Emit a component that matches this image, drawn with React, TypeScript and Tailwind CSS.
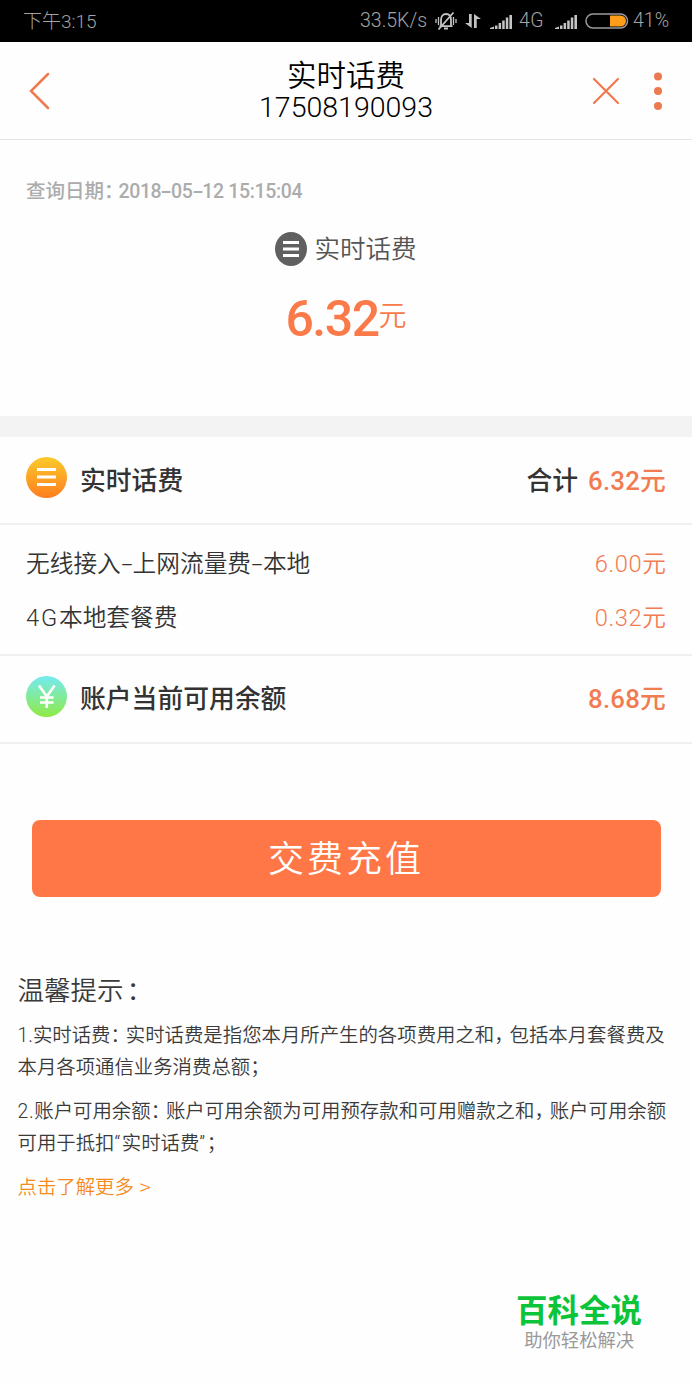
import type { ReactNode } from "react";

const CARGOS = [
  { nombre: "无线接入-上网流量费-本地", monto: "6.00元" },
  { nombre: "4G本地套餐费", monto: "0.32元" },
];

function P({ children }: { children: ReactNode }) {
  return <span className="tracking-[-0.21em]">{children}</span>;
}

// hyphens are drawn wide and "4G" a bit looser than the rest
function Texto({ texto }: { texto: string }) {
  return (
    <>
      {texto.split(/(-|4G)/).map((t, i) => {
        if (t === "-") return <span key={i} className="inline-block w-[0.5em] text-center scale-x-[1.700]">-</span>;
        if (t === "4G") return <span key={i} className="tracking-[1.800px]">4G</span>;
        return <span key={i}>{t}</span>;
      })}
    </>
  );
}

function Signal() {
  return (
    <svg width="23" height="15" viewBox="0 0 23 15" fill="#c4c4c4" className="shrink-0">
      <path d="M0 15v-1l4-1.5V15zM5 11.500h2.500V15H5zM8.600 9h2.500v6H8.600zM12.200 6.500h2.500V15h-2.500zM15.800 3.500h2.500V15h-2.500zM19.400 1H22v14h-2.600z" />
    </svg>
  );
}

function StatusBar() {
  return (
    <div className="h-[42px] bg-black flex items-center pl-[23px] pr-[22px] text-[#a3a3a3] text-[19px] font-light leading-none">
      <span className="flex-1">下午3:15</span>
      <span className="w-[66px] text-[19.500px] whitespace-nowrap">33.5K/s</span>
      <svg width="22" height="20" viewBox="0 0 22 20" fill="none" stroke="#c4c4c4" strokeWidth="1.800" className="ml-[9px] shrink-0">
        <path d="M4.500 15.200h13M6 15V9c0-4 2-6 5-6s5 2 5 6v6M3.500 18.500 18.500 1.500M9 17.500h4" />
        <path d="M3.500 6v8M1 8v4M18.500 6v8M21 8v4" strokeWidth="1.300" />
      </svg>
      <svg width="16" height="16" viewBox="0 0 16 16" fill="#c4c4c4" className="ml-[8px] shrink-0">
        <path d="M4 1h2.700v14L0 10h4zM9 1l7 5h-4.300v9H9z" />
      </svg>
      <div className="ml-[9px]"><Signal /></div>
      <span className="ml-[6px] w-[27px] text-[19.500px] tracking-[0.500px]">4G</span>
      <div className="ml-[9px]"><Signal /></div>
      <svg width="44" height="16" viewBox="0 0 44 16" className="ml-[7px] shrink-0">
        <rect x="1" y="1" width="41.500" height="14" rx="7" fill="none" stroke="#9a9a9a" strokeWidth="1.500" />
        <path d="M25 2.500h10.500a5.500 5.500 0 0 1 0 11H25z" fill="#ff9c1a" />
      </svg>
      <span className="ml-[4px] w-[37px] text-[19.500px] whitespace-nowrap">41%</span>
    </div>
  );
}

function Header() {
  return (
    <header className="h-[98px] border-b border-[#e4e4e4] flex items-center">
      <div className="w-[200px] pl-[28px]">
        <svg width="24" height="40" viewBox="0 0 24 40" fill="none" stroke="#f0794e" strokeWidth="2.500" strokeLinecap="round">
          <path d="M20 3 3 20l17 17" />
        </svg>
      </div>
      <div className="flex-1 text-center text-black font-light">
        <div className="pt-[2px] text-[29.500px] leading-[32px] font-[350]">实时话费</div>
        <div className="text-[28.500px] leading-[32px]">17508190093</div>
      </div>
      <div className="w-[200px] flex items-center justify-end gap-[33px] pr-[29px]">
        <svg width="28" height="28" viewBox="0 0 28 28" stroke="#f0794e" strokeWidth="2.200" strokeLinecap="round">
          <path d="m2 2 24 24M26 2 2 26" />
        </svg>
        <svg width="10" height="38" viewBox="0 0 10 38" fill="#ec7a50">
          <circle cx="5" cy="4.500" r="4" />
          <circle cx="5" cy="19" r="4" />
          <circle cx="5" cy="34" r="4" />
        </svg>
      </div>
    </header>
  );
}

export default function App() {
  return (
    <div className="w-[692px] h-[1384px] overflow-hidden bg-[#fefefe] text-[#333] font-[Roboto,'Noto_Sans_CJK_SC',sans-serif]">
      <StatusBar />
      <Header />

      <section className="h-[276px] pt-[40px]">
        <p className="pl-[26px] text-[19.500px] leading-6 font-medium text-[#acacac]">
          查询日期<P>：</P>
          <span className="-ml-px tracking-[-0.350px]"><Texto texto="2018-05-12 15:15:04" /></span>
        </p>
        <div className="mt-[28px] flex items-center justify-center gap-[7px]">
          <svg width="32" height="34" viewBox="0 0 32 34">
            <ellipse cx="16" cy="17" rx="16" ry="17" fill="#606060" />
            <path d="M8 10.500h16M8 17h16M8 23.500h16" stroke="#fff" strokeWidth="2.800" />
          </svg>
          <span className="text-[25.500px] leading-[34px] font-[350] text-[#555]">实时话费</span>
        </div>
        <div className="mt-[24px] flex items-start justify-center text-[#fb7a49]">
          <span className="text-[50px] leading-[58px] font-medium tracking-[-1.500px]">6.32</span>
          <span className="text-[28px] leading-[54px] font-[350]">元</span>
        </div>
      </section>

      <div className="h-[21px] bg-[#f3f3f3]" />

      <section className="h-[88px] border-b-2 border-[#f0f0f0] flex items-center px-[26px] text-[25.800px] font-medium">
        <svg width="41" height="41" viewBox="0 0 41 41" className="mb-[6px]">
          <defs>
            <linearGradient id="naranja" x1="0" y1="0" x2="0" y2="1">
              <stop offset="0" stopColor="#fbcb2b" />
              <stop offset="1" stopColor="#ff7d1f" />
            </linearGradient>
          </defs>
          <circle cx="20.500" cy="20.500" r="20.500" fill="url(#naranja)" />
          <path d="M11 12.500h19M11 20h19M11 27.500h19" stroke="#fff" strokeWidth="3" />
        </svg>
        <h2 className="ml-[13px] pt-[2px] flex-1">实时话费</h2>
        <span className="pt-[2px]">合计</span>
        <span className="ml-[10px] pt-[2px] tracking-[0.200px] text-[#f27c51]">6.32元</span>
      </section>

      <section className="h-[131px] border-b-2 border-[#f0f0f0] px-[26px] pt-[13px]">
        {CARGOS.map((c) => (
          <div key={c.nombre} className="h-[54px] flex items-center justify-between text-[23.700px] font-[350]">
            <span><Texto texto={c.nombre} /></span>
            <span className="tracking-[0.600px] -mr-[0.600px] text-[#f27c51]">{c.monto}</span>
          </div>
        ))}
      </section>

      <section className="h-[88px] border-b-2 border-[#f0f0f0] flex items-center px-[26px] text-[25.800px] font-medium">
        <svg width="41" height="41" viewBox="0 0 41 41" className="mb-[6px]">
          <defs>
            <linearGradient id="verde" x1="0" y1="0" x2="0" y2="1">
              <stop offset="0" stopColor="#74eaf2" />
              <stop offset="1" stopColor="#8fea45" />
            </linearGradient>
          </defs>
          <circle cx="20.500" cy="20.500" r="20.500" fill="url(#verde)" />
          <path d="m13 9.500 7.800 11 7.800-11M20.800 20v12M14 21.500h13.600M14 26.500h13.600" stroke="#fff" strokeWidth="2.600" fill="none" />
        </svg>
        <h2 className="ml-[13px] flex-1">账户当前可用余额</h2>
        <span className="tracking-[0.200px] text-[#f27c51]">8.68元</span>
      </section>

      <div className="px-[31.500px] pt-[76px]">
        <button className="w-full h-[77px] pt-[2px] rounded-[8px] bg-[#ff7746] text-white text-[36px] font-[350] tracking-[3px]">
          交费充值
        </button>
      </div>

      <section className="pt-[76px] pl-[17.500px] text-[19.400px] leading-[32px] font-[350] whitespace-nowrap text-[#3a3a3a]">
        <h3 className="text-[26.500px] leading-[36px]">
          温馨提示<span className="ml-[3px]">：</span>
        </h3>
        <p className="mt-[11px]">
          1.实时话费<P>：</P>实时话费是指您本月所产生的各项费用之和<P>，</P>包括本月套餐费及
          <br />
          本月各项通信业务消费总额；
        </p>
        <p className="mt-[12px]">
          <span className="tracking-[0.700px]">2.</span>账户可用余额<P>：</P>账户可用余额为可用预存款和可用赠款之和<P>，</P>账户可用余额
          <br />
          可用于抵扣<span className="tracking-[1.500px]">“</span>实时话费<span className="tracking-[1.500px]">”</span>；
        </p>
        <p className="mt-[12px] text-[#f58a1f]">
          点击了解更多 <span className="inline-block origin-left scale-x-[1.200]">&gt;</span>
        </p>
      </section>

      <footer className="mt-[88px] pr-[50px] flex flex-col items-end">
        <div className="text-[31.500px] leading-[40px] font-bold text-[#0bc43a]">百科全说</div>
        <div className="-mt-[2px] mr-[8px] text-[18.300px] leading-[22px] text-[#999]">助你轻松解决</div>
      </footer>
    </div>
  );
}
